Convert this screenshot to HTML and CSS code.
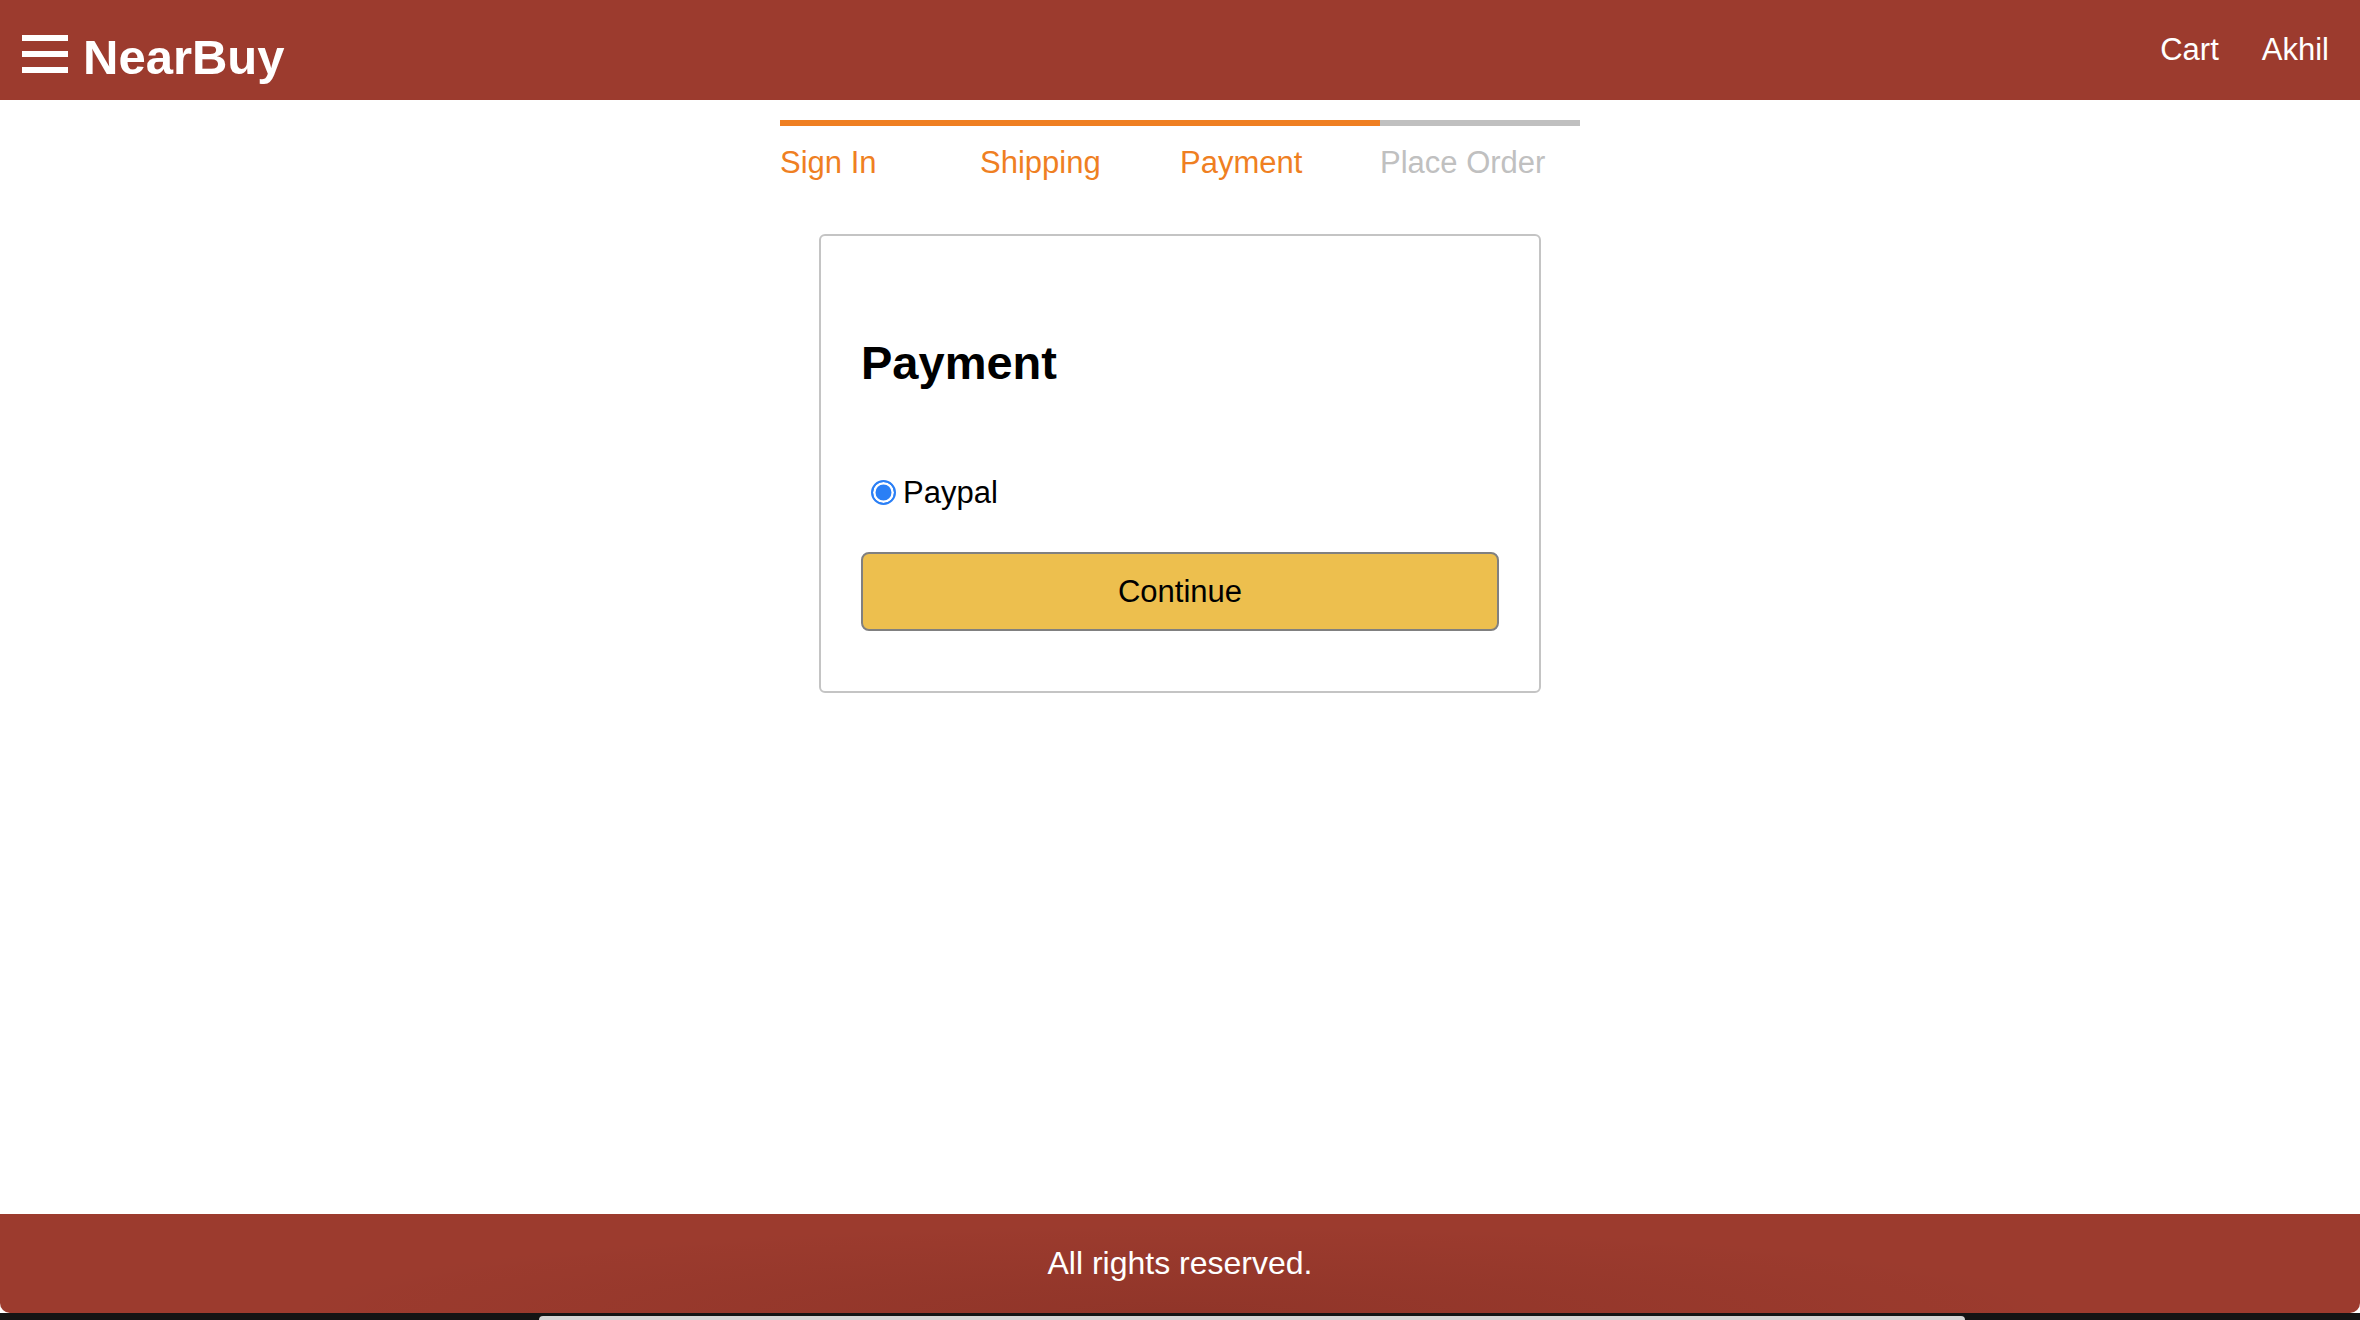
FILE: index.html
```html
<!DOCTYPE html>
<html lang="en">
<head>
<meta charset="utf-8">
<title>NearBuy - Payment</title>
<link rel="stylesheet" href="styles.css">
</head>
<body>
<div class="app">
  <header class="topbar">
    <div class="brand">
      <svg class="menu-icon" width="46" height="38" viewBox="0 0 46 38" aria-hidden="true">
        <rect x="0" y="0" width="46" height="6" fill="#fff"/>
        <rect x="0" y="16" width="46" height="6" fill="#fff"/>
        <rect x="0" y="32" width="46" height="6" fill="#fff"/>
      </svg>
      <a class="brand-name" href="#">NearBuy</a>
    </div>
    <nav class="topnav">
      <a href="#">Cart</a>
      <a href="#">Akhil</a>
    </nav>
  </header>

  <main class="main">
    <div class="steps">
      <div class="step active">Sign In</div>
      <div class="step active">Shipping</div>
      <div class="step active">Payment</div>
      <div class="step">Place Order</div>
    </div>

    <form class="card">
      <h1 class="card-title">Payment</h1>
      <label class="radio-row">
        <input class="radio" type="radio" name="payment" value="paypal" checked>
        <span>Paypal</span>
      </label>
      <button class="primary-btn" type="button">Continue</button>
    </form>
  </main>

  <footer class="footer">All rights reserved.</footer>
  <div class="dock-strip"><div class="dock-pill"></div></div>
</div>
</body>
</html>
```

FILE: styles.css
```css
* {
  box-sizing: border-box;
}

html, body {
  margin: 0;
  padding: 0;
  height: 100%;
}

body {
  font-family: "Liberation Sans", Arial, Helvetica, sans-serif;
  background: #ffffff;
  color: #000;
}

.app {
  display: flex;
  flex-direction: column;
  min-height: 100vh;
}

/* Header */
.topbar {
  height: 100px;
  background: #9c3b2e;
  display: flex;
  justify-content: space-between;
  align-items: flex-start;
  padding: 31px 31px 0 22px;
}

.brand {
  display: flex;
  align-items: flex-start;
  gap: 15px;
}

.menu-icon {
  display: block;
  margin-top: 4px;
}

.brand-name {
  color: #fff;
  text-decoration: none;
  font-weight: bold;
  font-size: 49px;
  line-height: 1;
  margin-top: 2px;
}

.topnav {
  display: flex;
  gap: 43px;
  margin-top: 3px;
}

.topnav a {
  color: #fff;
  text-decoration: none;
  font-size: 31px;
  line-height: 1;
}

/* Main */
.main {
  flex: 1;
  display: flex;
  flex-direction: column;
  align-items: center;
  padding-top: 20px;
}

.steps {
  width: 800px;
  display: grid;
  grid-template-columns: repeat(4, 1fr);
}

.step {
  border-top: 6px solid #c0c0c0;
  color: #c0c0c0;
  font-size: 31px;
  line-height: 36px;
  padding-top: 19px;
}

.step.active {
  border-top-color: #ef7f22;
  color: #ef7f22;
}

.card {
  width: 722px;
  margin-top: 53px;
  border: 2px solid #c4c4c4;
  border-radius: 6px;
  padding: 99px 40px 60px;
  display: flex;
  flex-direction: column;
}

.card-title {
  margin: 0;
  font-size: 47px;
  line-height: 55px;
  font-weight: bold;
}

.radio-row {
  margin-top: 84px;
  display: flex;
  align-items: center;
  gap: 7px;
  padding-left: 10px;
  font-size: 31px;
  line-height: 37px;
}

.radio {
  appearance: none;
  -webkit-appearance: none;
  margin: 0;
  width: 25px;
  height: 25px;
  border-radius: 50%;
  border: 2.5px solid #2a7ff6;
  background: #2a7ff6;
  box-shadow: inset 0 0 0 2.5px #fff;
}

.primary-btn {
  margin-top: 41px;
  height: 79px;
  width: 100%;
  background: #edbf4e;
  border: 2px solid #808080;
  border-radius: 8px;
  font-family: "Liberation Sans", Arial, Helvetica, sans-serif;
  font-size: 31px;
  color: #000;
  cursor: pointer;
}

/* Footer */
.footer {
  height: 99px;
  background-color: #9c3b2e;
  background-image: radial-gradient(ellipse 38% 90% at 50% 100%, rgba(60, 10, 5, 0.12), rgba(60, 10, 5, 0));
  color: #fff;
  font-size: 32px;
  line-height: 37px;
  display: flex;
  align-items: center;
  justify-content: center;
  padding-bottom: 1px;
  border-radius: 0 0 10px 10px;
}

.dock-strip {
  height: 7px;
  background: #141414;
  display: flex;
  justify-content: flex-start;
  align-items: flex-end;
  padding-left: 539px;
}

.dock-pill {
  width: 1426px;
  height: 4px;
  background: #d4d4d4;
  border-radius: 6px 6px 0 0;
}
```
